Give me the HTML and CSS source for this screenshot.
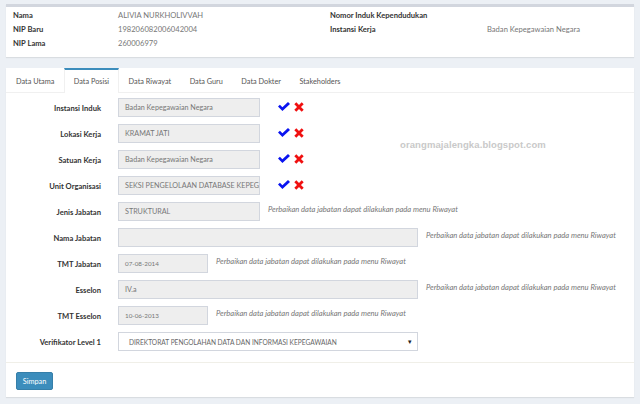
FILE: index.html
```html
<!DOCTYPE html>
<html>
<head>
<meta charset="utf-8">
<link rel="stylesheet" href="styles.css">
</head>
<body>
<div class="box profile">
  <div class="plabel">Nama</div><div class="pval">ALIVIA NURKHOLIVVAH</div>
  <div class="plabel">Nomor Induk Kependudukan</div><div class="pval"></div>
  <div class="plabel">NIP Baru</div><div class="pval">198206082006042004</div>
  <div class="plabel">Instansi Kerja</div><div class="pval">Badan Kepegawaian Negara</div>
  <div class="plabel">NIP Lama</div><div class="pval">260006979</div>
  <div class="plabel"></div><div class="pval"></div>
</div>

<div class="box tabs-card">
  <ul class="tabs">
    <li class="tab">Data Utama</li>
    <li class="tab active">Data Posisi</li>
    <li class="tab">Data Riwayat</li>
    <li class="tab">Data Guru</li>
    <li class="tab">Data Dokter</li>
    <li class="tab">Stakeholders</li>
  </ul>
  <div class="watermark">orangmajalengka.blogspot.com</div>
  <div class="form">
    <div class="row">
      <label class="lbl">Instansi Induk</label>
      <div class="inp short">Badan Kepegawaian Negara</div>
      <div class="acts">
        <svg class="chk" viewBox="0 0 12 9"><polygon points="0,4.6 1.9,2.8 4.4,5.2 10,0 12,1.9 4.4,9" fill="#0a14f0"/></svg>
        <svg class="xx" viewBox="0 0 10 10"><path d="M1.3 1.3 L8.7 8.7 M8.7 1.3 L1.3 8.7" stroke="#f01010" stroke-width="2.8"/></svg>
      </div>
    </div>
    <div class="row">
      <label class="lbl">Lokasi Kerja</label>
      <div class="inp short">KRAMAT JATI</div>
      <div class="acts">
        <svg class="chk" viewBox="0 0 12 9"><polygon points="0,4.6 1.9,2.8 4.4,5.2 10,0 12,1.9 4.4,9" fill="#0a14f0"/></svg>
        <svg class="xx" viewBox="0 0 10 10"><path d="M1.3 1.3 L8.7 8.7 M8.7 1.3 L1.3 8.7" stroke="#f01010" stroke-width="2.8"/></svg>
      </div>
    </div>
    <div class="row">
      <label class="lbl">Satuan Kerja</label>
      <div class="inp short">Badan Kepegawaian Negara</div>
      <div class="acts">
        <svg class="chk" viewBox="0 0 12 9"><polygon points="0,4.6 1.9,2.8 4.4,5.2 10,0 12,1.9 4.4,9" fill="#0a14f0"/></svg>
        <svg class="xx" viewBox="0 0 10 10"><path d="M1.3 1.3 L8.7 8.7 M8.7 1.3 L1.3 8.7" stroke="#f01010" stroke-width="2.8"/></svg>
      </div>
    </div>
    <div class="row">
      <label class="lbl">Unit Organisasi</label>
      <div class="inp short">SEKSI PENGELOLAAN DATABASE KEPEGAWAIAN</div>
      <div class="acts">
        <svg class="chk" viewBox="0 0 12 9"><polygon points="0,4.6 1.9,2.8 4.4,5.2 10,0 12,1.9 4.4,9" fill="#0a14f0"/></svg>
        <svg class="xx" viewBox="0 0 10 10"><path d="M1.3 1.3 L8.7 8.7 M8.7 1.3 L1.3 8.7" stroke="#f01010" stroke-width="2.8"/></svg>
      </div>
    </div>
    <div class="row">
      <label class="lbl">Jenis Jabatan</label>
      <div class="inp short">STRUKTURAL</div>
      <span class="help">Perbaikan data jabatan dapat dilakukan pada menu Riwayat</span>
    </div>
    <div class="row">
      <label class="lbl">Nama Jabatan</label>
      <div class="inp wide"></div>
      <span class="help">Perbaikan data jabatan dapat dilakukan pada menu Riwayat</span>
    </div>
    <div class="row">
      <label class="lbl">TMT Jabatan</label>
      <div class="inp date">07-08-2014</div>
      <span class="help">Perbaikan data jabatan dapat dilakukan pada menu Riwayat</span>
    </div>
    <div class="row">
      <label class="lbl">Esselon</label>
      <div class="inp wide">IV.a</div>
      <span class="help">Perbaikan data jabatan dapat dilakukan pada menu Riwayat</span>
    </div>
    <div class="row">
      <label class="lbl">TMT Esselon</label>
      <div class="inp date">10-06-2013</div>
      <span class="help">Perbaikan data jabatan dapat dilakukan pada menu Riwayat</span>
    </div>
    <div class="row">
      <label class="lbl">Verifikator Level 1</label>
      <div class="select wide"><span>DIREKTORAT PENGOLAHAN DATA DAN INFORMASI KEPEGAWAIAN</span><span class="caret">&#9662;</span></div>
    </div>
  </div>
  <div class="footer">
    <button class="btn">Simpan</button>
  </div>
</div>
</body>
</html>
```
FILE: styles.css
```css
* { box-sizing: border-box; }
html, body { margin: 0; padding: 0; }
body {
  background: #ecf0f5;
  font-family: "Lato", "Noto Sans", sans-serif;
  font-size: 7.6px;
  color: #333;
  padding: 4px 6px 0 6px;
  width: 640px;
  height: 404px;
  overflow: hidden;
}
.box {
  background: #fff;
  box-shadow: 0 1px 1px rgba(0,0,0,0.08);
}
.profile {
  border-top: 3px solid #d2d6de;
  padding: 1px 7px 7px 7px;
  display: grid;
  grid-template-columns: 105px 212px 157px 1fr;
  grid-auto-rows: 14px;
  align-items: center;
  height: 53px;
}
.plabel { font-weight: 700; color: #333; }
.pval { color: #777; }
.tabs-card {
  margin-top: 11px;
  position: relative;
  height: 329px;
}
.tabs {
  list-style: none;
  margin: 0;
  padding: 0 0 0 1.5px;
  display: flex;
  height: 25px;
  border-bottom: 1px solid #f0f0f0;
}
.tab {
  padding: 0 8.5px;
  margin-right: 1.5px;
  height: 25px;
  line-height: 23px;
  border-top: 2px solid transparent;
  color: #555;
  font-size: 7.3px;
}
.tab.active {
  border-top-color: #3c8dbc;
  border-left: 1px solid #f0f0f0;
  border-right: 1px solid #f0f0f0;
  background: #fff;
  height: 25px;
  margin-bottom: -1px;
}
.watermark {
  position: absolute;
  left: 394px;
  top: 71px;
  font-family: "Liberation Sans", Arial, sans-serif;
  font-weight: 700;
  font-size: 9.5px;
  letter-spacing: 0.1px;
  color: #c9c9c9;
}
.form {
  padding: 5px 0 11px 0;
}
.row {
  display: flex;
  align-items: center;
  height: 19px;
  margin-bottom: 7px;
}
.row:last-child { margin-bottom: 0; }
.lbl {
  width: 95px;
  text-align: right;
  font-weight: 700;
  color: #333;
  margin-right: 17px;
  white-space: nowrap;
}
.inp {
  height: 19px;
  background: #eee;
  border: 1px solid #d2d6de;
  padding: 0 6px;
  line-height: 17px;
  color: #777;
  font-size: 7.2px;
  white-space: nowrap;
  overflow: hidden;
}
.short { width: 142px; }
.wide { width: 300px; }
.date { width: 90px; font-size: 6.3px; }
.acts {
  display: flex;
  align-items: center;
  margin-left: 18px;
  margin-top: -2px;
}
.chk { width: 12px; height: 9px; display: block; }
.xx { width: 10px; height: 10px; display: block; margin-left: 4px; }
.help {
  margin-left: 8px;
  align-self: flex-start;
  margin-top: 2px;
  line-height: 10px;
  font-style: italic;
  font-size: 7.6px;
  color: #777;
  white-space: nowrap;
}
.select {
  height: 19px;
  border: 1px solid #d2d6de;
  background: #fff;
  display: flex;
  align-items: center;
  justify-content: space-between;
  padding: 0 5px 0 10px;
  font-size: 6.6px;
  color: #666;
}
.caret { font-size: 7px; color: #222; }
.footer {
  border-top: 1px solid #f0efe8;
  padding: 9px 10px 7px 10px;
}
.btn {
  display: block;
  width: 37px;
  height: 18px;
  padding: 0;
  background: #3c8dbc;
  border: 1px solid #367fa9;
  border-radius: 2px;
  color: #fff;
  font-family: "Lato", "Noto Sans", sans-serif;
  font-size: 7.3px;
}
```
